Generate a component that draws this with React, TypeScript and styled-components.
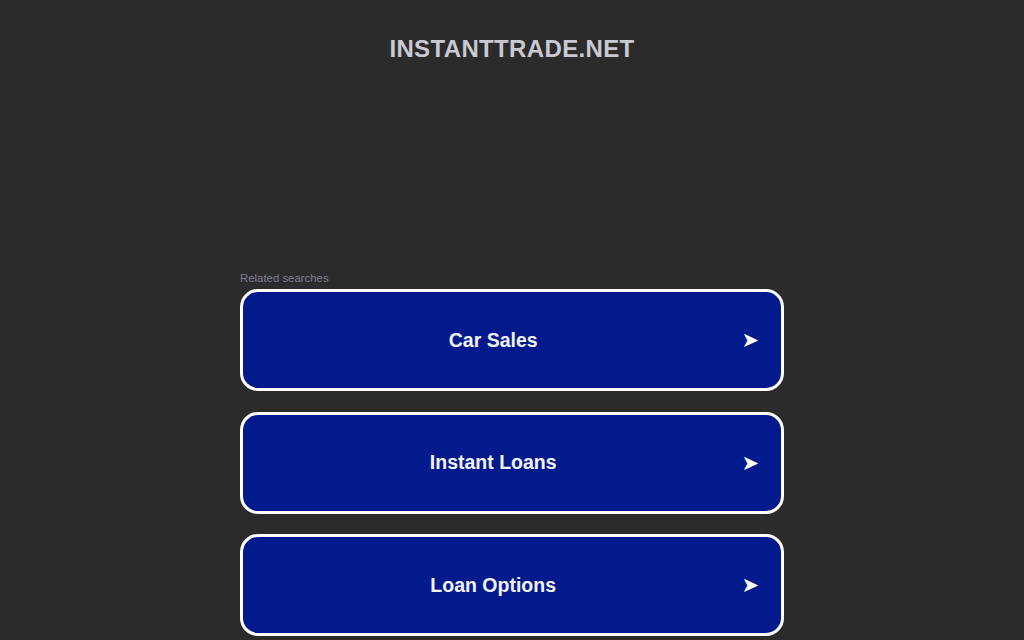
import React from 'react'
import styled, { createGlobalStyle } from 'styled-components'

const Global = createGlobalStyle`
  html, body {
    margin: 0;
    padding: 0;
    background: #2b2b2b;
    font-family: "Liberation Sans", Arial, sans-serif;
  }
`

const Page = styled.div`
  display: flex;
  flex-direction: column;
  align-items: center;
`

const Header = styled.h1`
  margin: 0;
  padding-top: 35px;
  height: 272px;
  box-sizing: border-box;
  font-size: 24px;
  font-weight: bold;
  letter-spacing: 0.35px;
  color: #c9c9d2;
  text-transform: uppercase;
`

const Results = styled.div`
  width: 544px;
  display: flex;
  flex-direction: column;
`

const Label = styled.div`
  font-size: 11.4px;
  color: #7f7f92;
  margin-bottom: 4px;
  line-height: 13px;
`

const List = styled.div`
  display: flex;
  flex-direction: column;
  gap: 20.5px;
`

const Item = styled.a`
  display: flex;
  align-items: center;
  height: 102px;
  box-sizing: border-box;
  padding-right: 22px;
  padding-left: 2px;
  border: 3px solid #ffffff;
  border-radius: 18px;
  background: #021a8b;
  color: #f2f2f6;
  text-decoration: none;
  cursor: pointer;
`

const Title = styled.span`
  flex: 1;
  text-align: center;
  font-size: 19.5px;
  font-weight: bold;
`

const Arrow = styled.span`
  font-size: 21px;
  color: #ffffff;
  font-family: "DejaVu Sans", sans-serif;
`

const items = ['Car Sales', 'Instant Loans', 'Loan Options']

export default function App() {
  return (
    <Page>
      <Global />
      <Header>instanttrade.net</Header>
      <Results>
        <Label>Related searches</Label>
        <List>
          {items.map((t) => (
            <Item key={t}>
              <Title>{t}</Title>
              <Arrow>➤</Arrow>
            </Item>
          ))}
        </List>
      </Results>
    </Page>
  )
}
